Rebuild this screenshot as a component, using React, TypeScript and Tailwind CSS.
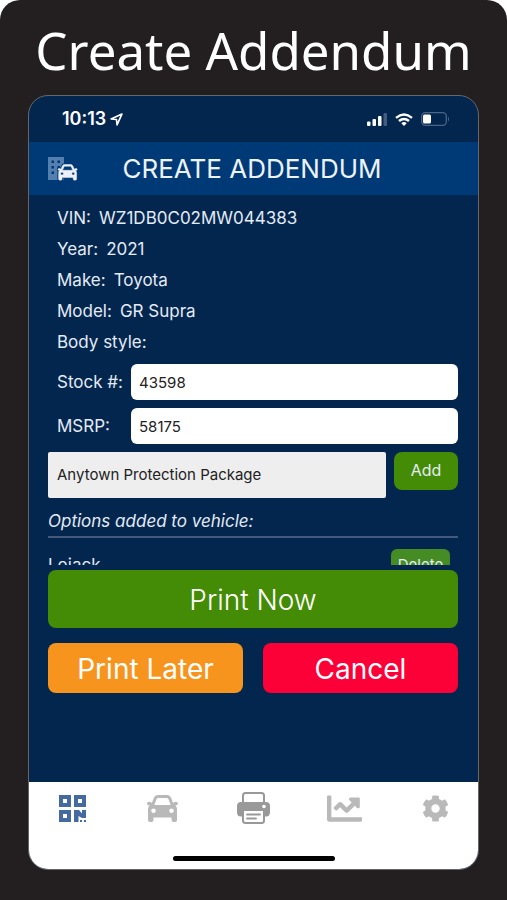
import { useState } from "react";
import { FaChartLine, FaCog } from "react-icons/fa";

const VEHICLE = [
  { label: "VIN:", value: "WZ1DB0C02MW044383" },
  { label: "Year:", value: "2021" },
  { label: "Make:", value: "Toyota" },
  { label: "Model:", value: "GR Supra" },
  { label: "Body style:", value: "" },
];

const CAR_PATH =
  "M10.500 0H20.500Q23 0 24 2.500L26.200 8Q27 6.800 29 6.800Q31 6.800 31 8.500Q31 10.300 28.500 10.500Q30 12 30 14.500V25Q30 27 28 27H26.500Q24.500 27 24.500 25V22.500H6.500V25Q6.500 27 4.500 27H3Q1 27 1 25V14.500Q1 12 2.500 10.500Q0 10.300 0 8.500Q0 6.800 2 6.800Q4 6.800 4.800 8L7 2.500Q8 0 10.500 0ZM11.200 3Q10 3 9.500 4.200L7.300 10H23.700L21.500 4.200Q21 3 19.800 3ZM6.500 13.500A2.300 2.300 0 1 0 6.500 18.100A2.300 2.300 0 1 0 6.500 13.500ZM24.500 13.500A2.300 2.300 0 1 0 24.500 18.100A2.300 2.300 0 1 0 24.500 13.500Z";

function CarIcon({ className }: { className?: string }) {
  return (
    <svg viewBox="0 0 31 27" className={className} fill="currentColor" fillRule="evenodd" aria-hidden="true">
      <path d={CAR_PATH} />
    </svg>
  );
}

function QrIcon({ className }: { className?: string }) {
  return (
    <svg viewBox="0 0 27 27" className={className} fill="currentColor" fillRule="evenodd" aria-hidden="true">
      <path d="M0 0H12V12H0ZM4 4V8H8V4ZM15 0H27V12H15ZM19 4V8H23V4ZM0 15H12V27H0ZM4 19V23H8V19Z" />
      <path d="M15 15H20L23 18.500V15H27V23H23L19.500 21V27H15Z" />
      <path d="M21 25H23V27H21ZM25 25H27V27H25Z" />
    </svg>
  );
}

function PrinterIcon({ className }: { className?: string }) {
  return (
    <svg viewBox="0 0 33 32" className={className} fill="none" aria-hidden="true">
      <path d="M6 11V3.500Q6 1 8.500 1H24.500Q27 1 27 3.500V11" stroke="currentColor" strokeWidth="2" />
      <path
        d="M4 10H29Q33 10 33 14V20Q33 24.500 29 24.500H27.500V18H5.500V24.500H4Q0 24.500 0 20V14Q0 10 4 10Z"
        fill="currentColor"
      />
      <circle cx="27" cy="14.500" r="1.800" fill="white" />
      <path d="M6 18H27V28.500Q27 31 24.500 31H8.500Q6 31 6 28.500Z" fill="white" stroke="currentColor" strokeWidth="2" />
      <path d="M10 22.500H23M10 26.500H19" stroke="currentColor" strokeWidth="1.800" strokeLinecap="round" />
    </svg>
  );
}

function DealerIcon() {
  return (
    <svg viewBox="0 0 30 24" className="h-6 w-[30px]" fillRule="evenodd" aria-hidden="true">
      <path
        fill="#547fae"
        d="M0 0H16V23H0ZM3.500 3.500V6H6V3.500ZM9.500 3.500V6H12V3.500ZM3.500 9V11.500H6V9ZM9.500 9V11.500H12V9ZM3.500 14.500V17H6V14.500Z"
      />
      <g transform="translate(10 7.500) scale(0.620 0.580)">
        <path d={CAR_PATH} fill="#003a76" stroke="#003a76" strokeWidth="4" />
        <path d={CAR_PATH} fill="#edf0fb" stroke="#edf0fb" strokeWidth="0.800" />
      </g>
    </svg>
  );
}

function StatusBar() {
  return (
    <div className="flex h-[46px] items-center justify-between pr-7 pl-[33px] text-white">
      <div className="flex items-center gap-1">
        <span className="text-[18px] leading-6 font-semibold">10:13</span>
        <svg viewBox="0 0 12 12" className="size-[13px]" fill="none" stroke="currentColor" strokeWidth="1.500" strokeLinejoin="round">
          <path d="M11 1 1 5.500 6 6 6.500 11Z" />
        </svg>
      </div>
      <div className="flex items-center gap-2">
        <svg viewBox="0 0 20 13" className="h-[13px] w-5 fill-white">
          <rect x="0" y="8.500" width="3.500" height="4.500" rx="1" />
          <rect x="5.500" y="6" width="3.500" height="7" rx="1" />
          <rect x="11" y="3" width="3.500" height="10" rx="1" />
          <rect x="16.500" y="0" width="3.500" height="13" rx="1" opacity="0.250" />
        </svg>
        <svg viewBox="0 0 18 13" className="h-[13px] w-[18px]" fill="none" stroke="white" strokeWidth="2.400">
          <path d="M1 4.800Q9-2 17 4.800" />
          <path d="M4 8Q9 3.800 14 8" />
          <path d="M6.300 10.200Q9 8 11.700 10.200L9 13Z" fill="white" stroke="none" />
        </svg>
        <svg viewBox="0 0 29 14" className="h-[14px] w-[29px]">
          <rect x="0.700" y="0.700" width="24.600" height="12.600" rx="3.500" fill="none" stroke="#4c6587" strokeWidth="1.300" />
          <path d="M27 4.500Q29 7 27 9.500Z" fill="#4c6587" />
          <rect x="2" y="2.500" width="8" height="9" rx="1.500" fill="white" />
        </svg>
      </div>
    </div>
  );
}

function Field({ id, label, value, onChange }: { id: string; label: string; value: string; onChange: (v: string) => void }) {
  return (
    <div className="flex items-center">
      <label htmlFor={id} className="w-[83px] shrink-0 pt-0.5 pl-[9px]">
        {label}
      </label>
      <input
        id={id}
        value={value}
        onChange={(e) => onChange(e.target.value)}
        className="h-9 min-w-0 flex-1 rounded-md bg-white px-2 text-[15px] text-[#222]"
      />
    </div>
  );
}

export default function App() {
  const [stock, setStock] = useState("43598");
  const [msrp, setMsrp] = useState("58175");

  return (
    <div className="bg-white">
      <main className="flex min-h-screen flex-col rounded-t-[20px] bg-[#231f20] px-7 pb-[30px]">
        <h1 className="pt-[14px] pb-[9px] text-center font-['Noto_Sans'] text-[51px] leading-[72px] whitespace-nowrap text-white">
          Create Addendum
        </h1>

        <div className="flex flex-1 flex-col overflow-hidden rounded-[20px] border border-[#66676b] bg-[#03264f] font-[Inter,sans-serif] text-[#e4ebf5]">
          <StatusBar />

          <header className="grid h-[53px] grid-cols-[66px_1fr_88px] items-center bg-[#003a76] pl-[19px]">
            <DealerIcon />
            <h2 className="text-center text-[26px] leading-8 whitespace-nowrap text-[#edf3fc]">CREATE ADDENDUM</h2>
          </header>

          <div className="pt-2 pr-5 pl-[19px]">
            {/* Vehicle details */}
            <dl className="pl-[9px] text-[17px] leading-[31px]">
              {VEHICLE.map((row) => (
                <div key={row.label} className="flex gap-2">
                  <dt>{row.label}</dt>
                  <dd>{row.value}</dd>
                </div>
              ))}
            </dl>

            <div className="mt-[6px] flex flex-col gap-2 text-[17px]">
              <Field id="stock" label="Stock #:" value={stock} onChange={setStock} />
              <Field id="msrp" label="MSRP:" value={msrp} onChange={setMsrp} />
            </div>

            <div className="mt-2 flex items-start gap-2">
              <select
                aria-label="Package"
                className="h-[46px] min-w-0 flex-1 appearance-none rounded-xs bg-[#eee] px-[9px] text-[15px] text-[#222]"
              >
                <option>Anytown Protection Package</option>
              </select>
              <button className="h-[38px] w-16 rounded-lg bg-[#458c06] pb-0.5 text-[16px]">Add</button>
            </div>

            {/* Options */}
            <h3 className="mt-[9px] border-b-2 border-[#42597b] pb-px text-[17px] leading-7 italic">Options added to vehicle:</h3>
            <div className="h-[27px] overflow-hidden">
              <div className="flex items-start justify-between pt-[11px] pr-2">
                <span className="text-[17px] leading-8">Lojack</span>
                <button className="h-8 w-[59px] rounded-md bg-[#458c24] text-[15px]">Delete</button>
              </div>
            </div>

            {/* Actions */}
            <button className="mt-[5px] h-[58px] w-full rounded-lg bg-[#458c06] pt-0.5 text-[28px] font-light text-white">
              Print Now
            </button>
            <div className="mt-[15px] grid grid-cols-2 gap-5 text-[28px] text-white">
              <button className="h-[50px] rounded-lg bg-[#f7941e] pt-0.5">Print Later</button>
              <button className="h-[50px] rounded-lg bg-[#fc0038] pt-0.5">Cancel</button>
            </div>
          </div>

          {/* Tab bar */}
          <nav className="mt-auto flex h-[87px] flex-col justify-between bg-white pb-2 text-[#b9b9b9]">
            <div className="flex justify-between px-[23px] pt-[9px]">
              <button aria-label="Scan" className="flex h-[34px] w-10 items-center justify-center text-[#446a9f]">
                <QrIcon className="size-[27px]" />
              </button>
              <button aria-label="Vehicles" className="flex h-[34px] w-10 items-center justify-center">
                <CarIcon className="h-[27px] w-[31px]" />
              </button>
              <button aria-label="Print" className="flex h-[34px] w-10 items-center justify-center text-[#999]">
                <PrinterIcon className="h-8 w-[33px]" />
              </button>
              <button aria-label="Reports" className="flex h-[34px] w-10 items-center justify-center">
                <FaChartLine className="size-[35px]" />
              </button>
              <button aria-label="Settings" className="flex h-[34px] w-10 items-center justify-center">
                <FaCog className="size-[27px]" />
              </button>
            </div>
            <div className="mx-auto h-[5px] w-[162px] rounded-full bg-black" />
          </nav>
        </div>
      </main>
    </div>
  );
}
